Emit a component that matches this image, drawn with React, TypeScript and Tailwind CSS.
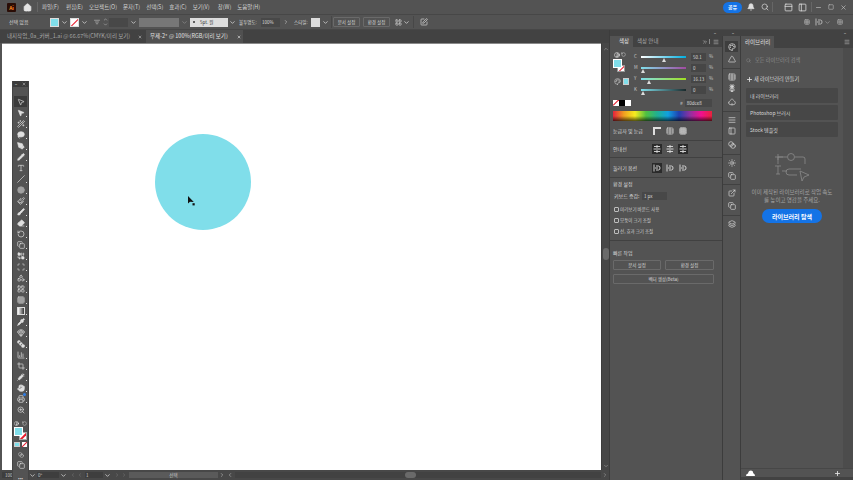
import React from "react";
import {
  Home, Bell, Search, Minus, Square, X, ChevronDown, ChevronsRight, Menu, MousePointer2, Wand2, Lasso, PenTool, Pencil, Type, Slash, Circle, Paintbrush, Brush, Eraser, RotateCcw, Copy, Scan, Shapes, Grid3x3, Blend, Pipette, BarChart3, Crop, Syringe, Hand, ZoomIn, Layers, ExternalLink, Spade, Palette, Table, Flower2, AlignJustify, Contrast, Sun, Plus, ChevronRight, SquarePen, LayoutGrid, PanelTop, Columns2, ChevronLeft, ChevronUp, Printer, Combine, SquareStack, Triangle, Gem, PanelLeft, ListFilter,
} from "lucide-react";

const menus = [["파일(F)", 7], ["편집(E)", 6], ["오브젝트(O)", 6], ["문자(T)", 6], ["선택(S)", 6], ["효과(C)", 6], ["보기(V)", 8], ["창(W)", 6], ["도움말(H)", 0]] as const;

const tools: [any, boolean][] = [
  [MousePointer2, true], [Wand2, false], [Lasso, true], [PenTool, true], [Pencil, true], [Type, false], [Slash, false], [Circle, true], [Paintbrush, false], [Brush, true], [Eraser, true], [RotateCcw, false], [Copy, false], [Combine, true], [Scan, false], [Shapes, false], [LayoutGrid, false], [Grid3x3, false], [Square, false], [Pipette, true], [Gem, false], [SquareStack, true], [BarChart3, false], [Crop, false], [Syringe, true], [Hand, true], [Printer, false], [ZoomIn, false],
];

const strip: [any, number, boolean][] = [
  [Triangle, 5, true], [Table, 3, false], [Flower2, 6, false], [Spade, 5, true], [AlignJustify, 3, false], [PanelLeft, 6, false], [Blend, 5, true], [Sun, 5, false], [Copy, 4, true], [ExternalLink, 5, false], [Copy, 5, true], [Layers, 0, false],
];

function Chev({ className = "" }: { className?: string }) {
  return <ChevronDown size={7} strokeWidth={2.5} className={"text-[#dddddd] " + className} />;
}

function SmallBtn({ label }: { label: string }) {
  return <div className="h-[10px] w-[27px] border border-[#6a6a6a] rounded-[1px] flex items-center justify-center text-[4.5px] text-[#d8d8d8]">{label}</div>;
}

function Slider({ label, value, bar, thumb }: { label: string; value: string; bar: string; thumb: string }) {
  return (
    <div className="flex items-center h-[11px]">
      <span className="w-[7px] text-[4.5px] text-[#c8c8c8]">{label}</span>
      <div className={"relative w-[45px] h-[2px] " + bar}>
        <div className={"absolute top-[2px] w-0 h-0 border-x-[2.5px] border-b-[4px] border-x-transparent border-b-[#dddddd] " + thumb} />
      </div>
      <div className="ml-[5px] w-[15px] h-[8px] bg-[#464646] text-[4.5px] text-[#dddddd] pl-[2px] leading-[8px]">{value}</div>
      <span className="ml-[3px] text-[4.5px] text-[#c8c8c8]">%</span>
    </div>
  );
}

function Divider() {
  return <div className="h-px bg-[#414141] -ml-[3px] -mr-[4px] shrink-0" />;
}

function Check({ label }: { label: string }) {
  return (
    <div className="flex items-center gap-[1px] h-[11px]">
      <div className="w-[5px] h-[5px] border border-[#bdbdbd] rounded-[1px]" />
      <span className="text-[4.5px] text-[#cfcfcf]">{label}</span>
    </div>
  );
}

function Glyph({ active, children }: { active?: boolean; children: React.ReactNode }) {
  return <div className={"w-[10px] h-[10px] flex items-center justify-center text-[#dedede] " + (active ? "bg-[#2b2b2b]" : "")}>{children}</div>;
}

function SnapIcon() {
  return (
    <svg width="8" height="8" viewBox="0 0 8 8" fill="none" stroke="currentColor" strokeWidth="0.9">
      <path d="M1 0.5 V7.5 M3 2 H5.5 Q7 2 7 4 Q7 6 5.5 6 H3 M2 4 H5" />
    </svg>
  );
}

function GuideIcon() {
  return (
    <svg width="8" height="8" viewBox="0 0 8 8" fill="none" stroke="currentColor" strokeWidth="0.9">
      <path d="M4 0 V8 M1 1.5 H7 M0.5 4 H3 M5 4 H7.5 M1 6.5 H7" />
    </svg>
  );
}

function LibRow({ label }: { label: string }) {
  return <div className="h-[15px] bg-[#474747] rounded-[1px] flex items-center pl-[4px] text-[5px] text-[#d8d8d8] mb-[2px] shrink-0">{label}</div>;
}

export default function App() {
  return (
    <div className="w-[853px] h-[480px] overflow-hidden bg-[#535353] relative flex flex-col font-['Noto_Sans_CJK_KR','Noto_Sans',sans-serif] text-[#d8d8d8]">
      {/* title bar */}
      <div className="h-[15px] bg-[#535353] border-b border-[#474747] flex items-center shrink-0">
        <div className="ml-[7px] w-[9px] h-[9px] bg-[#2a0d06] rounded-[1px] flex items-center justify-center text-[5px] font-bold text-[#ff8a1f] leading-none">Ai</div>
        <Home size={9} className="ml-[7px] text-[#e4e4e4]" fill="#e4e4e4" />
        <div className="ml-[5px] h-[10px] w-px bg-[#666666]" />
        <div className="ml-[4px] flex items-center text-[5.5px] text-[#d4d4d4]">
          {menus.map(([m, g]) => (
            <span key={m} style={{ marginRight: g }}>{m}</span>
          ))}
        </div>
        <div className="ml-auto flex items-center">
          <div className="w-[19px] h-[11px] rounded-full bg-[#1473e6] text-white text-[5px] flex items-center justify-center font-bold">공유</div>
          <Bell size={8} className="ml-[5px] text-[#e0e0e0]" fill="#e0e0e0" />
          <Search size={8} className="ml-[6px] text-[#e0e0e0]" />
          <div className="ml-[3px] h-[10px] w-px bg-[#666666]" />
          <PanelTop size={9} className="ml-[11px] text-[#e0e0e0]" />
          <PanelLeft size={9} className="ml-[5px] text-[#e0e0e0]" />
          <div className="ml-[4px] h-[10px] w-px bg-[#666666]" />
          <Minus size={7} className="ml-[3px] text-[#cccccc]" />
          <Square size={6} className="ml-[6px] text-[#cccccc]" />
          <X size={7} className="ml-[6px] mr-[6px] text-[#cccccc]" />
        </div>
      </div>

      {/* control bar */}
      <div className="h-[15px] bg-[#535353] flex items-center shrink-0 text-[5px] border-b border-[#474747]">
        <span className="ml-[9px] w-[41px] text-[#d4d4d4]">선택 없음</span>
        <div className="w-[9px] h-[9px] bg-[#80deea] border border-[#dddddd]" />
        <Chev className="ml-[2px]" />
        <div className="ml-[2px] w-[9px] h-[9px] bg-white border border-[#dddddd] relative overflow-hidden">
          <div className="absolute left-[-2px] top-[3px] w-[12px] h-px bg-[#e81c2e] -rotate-45" />
        </div>
        <Chev className="ml-[2px]" />
        <ListFilter size={6} className="ml-[6px] text-[#dddddd]" />
        <div className="ml-[3px] flex flex-col">
          <ChevronUp size={5} className="text-[#dddddd]" />
          <ChevronDown size={5} className="text-[#dddddd]" />
        </div>
        <div className="ml-[1px] w-[19px] h-[9px] bg-[#484848]" />
        <Chev className="ml-[2px]" />
        <div className="ml-[2px] w-[40px] h-[9px] bg-[#777777]" />
        <Chev className="ml-[2px] opacity-40" />
        <div className="ml-[2px] w-[38px] h-[9px] bg-[#dcdcdc] text-[#333333] flex items-center pl-[3px] gap-[5px] text-[4.5px]">
          <span className="w-[2px] h-[2px] rounded-full bg-[#333333]" />
          <span>5pt. 원</span>
        </div>
        <Chev className="ml-px" />
        <span className="ml-[3px] w-[22px] text-[#dddddd] text-[4.5px]">불투명도:</span>
        <div className="w-[19px] h-[9px] bg-[#484848] pl-[1px] leading-[9px] text-[#dddddd] text-[4.5px]">100%</div>
        <ChevronRight size={6} className="ml-[3px] text-[#dddddd]" />
        <span className="ml-[5px] w-[17px] text-[#dddddd] text-[4.5px]">스타일:</span>
        <div className="w-[9px] h-[9px] bg-[#dcdcdc]" />
        <Chev className="ml-[2px]" />
        <div className="ml-[2px] h-[12px] w-px bg-[#474747]" />
        <div className="ml-px flex gap-[3px]">
          <SmallBtn label="문서 설정" />
          <SmallBtn label="환경 설정" />
        </div>
        <LayoutGrid size={7} className="ml-[5px] text-[#dddddd]" />
        <Chev className="ml-[1px]" />
        <div className="ml-[3px] h-[12px] w-px bg-[#474747]" />
        <SquarePen size={8} className="ml-[6px] text-[#dddddd]" />
        <div className="ml-auto flex items-center mr-[10px] text-[#bdbdbd]">
          <Grid3x3 size={6} />
          <div className="ml-[5px]"><SnapIcon /></div>
          <Chev className="ml-[1px] opacity-50" />
          <Table size={6} className="ml-[6px]" />
        </div>
      </div>

      <div className="flex flex-1 min-h-0">
        {/* document area */}
        <div className="w-[609px] flex flex-col shrink-0">
          <div className="h-[13px] bg-[#424242] flex items-stretch text-[5.5px] shrink-0">
            <div className="w-[146px] flex items-center pl-[7px] text-[#a8a8a8]">
              <span className="w-[131px] whitespace-nowrap">내지작업_0a_커버_1.ai @ 66.67%(CMYK/미리 보기)</span>
              <X size={4} className="text-[#cfcfcf]" strokeWidth={3} />
            </div>
            <div className="w-[97px] bg-[#505050] flex items-center pl-[4px] text-[#e2e2e2]">
              <span className="w-[87px] whitespace-nowrap">무제-2* @ 100%(RGB/미리 보기)</span>
              <X size={4} className="text-white" strokeWidth={3} />
            </div>
          </div>
          <div className="flex flex-1 min-h-0">
            <div className="flex-1 flex flex-col">
              <div className="flex-1 bg-white ml-[2px] border-t border-[#8a8a8a] relative">
                <div className="absolute left-[153px] top-[90px] w-[96px] h-[96px] rounded-full bg-[#80deea]" />
                <svg className="absolute left-[185px] top-[151px]" width="9" height="12" viewBox="0 0 9 12">
                  <path d="M1 1 L1 8.5 L3 6.8 L6.8 7 Z" fill="#111" />
                  <rect x="5.5" y="8.2" width="2.2" height="2.2" fill="#111" />
                </svg>
              </div>
            </div>
            <div className="w-[8px] bg-[#474747] flex flex-col items-center relative border-l border-[#3d3d3d]">
              <ChevronUp size={6} className="mt-[3px] text-[#aaaaaa]" />
              <div className="mt-[196px] w-[6px] h-[12px] rounded-full bg-[#6a6a6a]" />
              <ChevronDown size={6} className="mt-auto mb-[1px] text-[#aaaaaa]" />
            </div>
          </div>
          {/* status bar */}
          <div className="h-[10px] bg-[#484848] flex items-center text-[4.5px] text-[#c8c8c8] shrink-0">
            <div className="ml-[2px] w-[26px] bg-[#3e3e3e] h-[6px] pl-[3px] leading-[6px]">100</div>
            <Chev className="ml-[1px]" />
            <div className="ml-px w-[22px] h-[6px] bg-[#3e3e3e] leading-[6px] pl-px">0°</div>
            <Chev className="ml-[1px]" />
            <ChevronLeft size={6} className="ml-[3px] opacity-40" />
            <ChevronLeft size={6} className="ml-[1px] opacity-40" />
            <div className="ml-[2px] w-[18px] h-[6px] bg-[#3e3e3e] leading-[6px] pl-px">1</div>
            <Chev className="ml-[1px]" />
            <ChevronRight size={6} className="ml-[3px] opacity-40" />
            <ChevronRight size={6} className="ml-[1px] opacity-40" />
            <div className="ml-[2px] w-[89px] h-[6px] bg-[#5a5a5a] text-center leading-[6px]">선택</div>
            <ChevronRight size={6} className="ml-[1px]" />
            <ChevronLeft size={6} className="ml-[2px]" />
            <div className="ml-[2px] flex-1 h-[6px] bg-[#424242] relative">
              <div className="absolute left-[170px] top-0 h-[6px] w-[11px] bg-[#6a6a6a] rounded-full" />
            </div>
            <ChevronRight size={6} className="mx-[1px] text-[#aaaaaa]" />
          </div>
        </div>

        {/* properties/colour dock */}
        <div className="flex-1 flex flex-col min-w-0 border-l border-[#3c3c3c]">
          <div className="h-[6px] bg-[#424242] shrink-0 flex items-center text-[3px] leading-none text-[#bbbbbb]">
            <span className="ml-[104px]">••</span>
            <span className="ml-[16px]">••</span>
            <span className="ml-[110px]">••</span>
          </div>
          <div className="flex flex-1 min-h-0">
            <div className="w-[113px] shrink-0 bg-[#535353] border-r border-[#3c3c3c] flex flex-col">
              <div className="h-[11px] bg-[#424242] flex items-center text-[5.5px] shrink-0">
                <div className="w-[23px] h-full bg-[#535353] flex items-center pl-[9px] text-[#e6e6e6]">색상</div>
                <span className="ml-[4px] text-[#a8a8a8]">색상 안내</span>
                <ChevronsRight size={6} className="ml-auto text-[#c8c8c8]" />
                <span className="mx-[1px] w-px h-[5px] bg-[#888888]" />
                <Menu size={6} className="ml-[2px] mr-[3px] text-[#c8c8c8]" />
              </div>
              <div className="pl-[3px] pr-[4px] flex flex-col flex-1">
                <div className="h-[75px] shrink-0 pt-[2px] flex flex-col">
                  <div className="flex">
                    <div className="w-[23px] relative h-[47px] shrink-0">
                      <Contrast size={6} className="absolute left-[1px] top-[3px] text-white" />
                      <RotateCcw size={5} className="absolute left-[8px] top-[3px] text-[#dddddd]" />
                      <div className="absolute left-[4px] top-[16px] w-[8px] h-[7px] bg-white border border-[#999999] overflow-hidden">
                        <div className="absolute left-[-2px] top-[2px] w-[12px] h-px bg-[#e81c2e] -rotate-45" />
                      </div>
                      <div className="absolute left-0 top-[10px] w-[9px] h-[9px] bg-[#80deea] border border-white" />
                      <Palette size={7} className="absolute left-[1px] top-[29px] text-[#cccccc]" />
                      <div className="absolute left-[10px] top-[29px] w-[6px] h-[7px] bg-[#80deea] border border-[#cccccc]" />
                    </div>
                    <div className="flex-1 pt-[2px] -ml-[2px]">
                      <Slider label="C" value="50.1" thumb="left-[21px]" bar="bg-[linear-gradient(to_right,#ffffff,#00aee0)]" />
                      <Slider label="M" value="0" thumb="left-[0px]" bar="bg-[linear-gradient(to_right,#80deea,#a04aa0)]" />
                      <Slider label="Y" value="16.13" thumb="left-[6px]" bar="bg-[linear-gradient(to_right,#80deea,#a0e020)]" />
                      <Slider label="K" value="0" thumb="left-[0px]" bar="bg-[linear-gradient(to_right,#80deea,#1a2a2c)]" />
                    </div>
                  </div>
                  <div className="flex items-center h-[8px] mt-[3px]">
                    <div className="w-[6px] h-[6px] bg-white relative overflow-hidden">
                      <div className="absolute left-[-1px] top-[2px] w-[8px] h-px bg-[#e81c2e] -rotate-45" />
                    </div>
                    <div className="w-[6px] h-[6px] bg-black" />
                    <div className="w-[6px] h-[6px] bg-white" />
                    <span className="ml-[49px] text-[5px] text-[#cccccc]">#</span>
                    <div className="ml-[2px] w-[27px] h-[8px] bg-[#484848] text-[4.5px] leading-[8px] pl-[2px] text-[#dddddd]">80dce8</div>
                  </div>
                  <div className="mt-[4px] w-[99px] h-[10px] bg-[linear-gradient(to_bottom,#ffffff00,#ffffff00_50%,#000000aa),linear-gradient(to_right,#e8223c,#f0a020,#f6ec20,#50c040,#20b090,#10a0e0,#2040b0,#9030a0,#f01090,#e8223c)]" />
                </div>
                <div className="h-[13px] flex items-center mt-[2px] shrink-0">
                  <span className="w-[39px] text-[5px]">눈금자 및 눈금</span>
                  <div className="flex gap-[3px]">
                    <Glyph>
                      <svg width="8" height="8" viewBox="0 0 8 8" fill="currentColor"><path d="M0 0 H8 V2 H2 V8 H0 Z" /></svg>
                    </Glyph>
                    <Glyph><Table size={8} /></Glyph>
                    <Glyph><Grid3x3 size={8} strokeDasharray="1 1" /></Glyph>
                  </div>
                </div>
                <div className="h-[3px] shrink-0" />
                <Divider />
                <div className="h-[16px] flex items-center shrink-0">
                  <span className="w-[39px] text-[5px]">안내선</span>
                  <div className="flex gap-[3px]">
                    <Glyph active><GuideIcon /></Glyph>
                    <Glyph><GuideIcon /></Glyph>
                    <Glyph active><GuideIcon /></Glyph>
                  </div>
                </div>
                <Divider />
                <div className="h-[19px] flex items-center shrink-0">
                  <span className="w-[39px] text-[5px]">둘러기 옵션</span>
                  <div className="flex gap-[3px]">
                    <Glyph active><SnapIcon /></Glyph>
                    <Glyph><SnapIcon /></Glyph>
                    <Glyph><SnapIcon /></Glyph>
                  </div>
                </div>
                <Divider />
                <div className="h-[11px] flex items-center text-[5px] shrink-0">환경 설정</div>
                <div className="h-[10px] mt-[2px] flex items-center text-[5px] pl-px shrink-0">
                  <span className="w-[28px]">키보드 증감:</span>
                  <div className="w-[25px] h-[8px] bg-[#484848] text-[4.5px] leading-[8px] pl-[2px]">1 px</div>
                </div>
                <div className="h-[3px] shrink-0" />
                <div className="pl-[1px] shrink-0">
                  <Check label="미리보기 바운드 사용" />
                  <Check label="모퉁이 크기 조절" />
                  <Check label="선, 효과 크기 조절" />
                </div>
                <div className="h-[3px] shrink-0" />
                <Divider />
                <div className="h-[18px] flex items-center text-[5px] pt-[5px] shrink-0">빠른 작업</div>
                <div className="flex gap-[4px] mt-[1px]">
                  <div className="w-[48px] h-[10px] border border-[#6a6a6a] rounded-[1px] flex items-center justify-center text-[4.5px]">문서 설정</div>
                  <div className="w-[49px] h-[10px] border border-[#6a6a6a] rounded-[1px] flex items-center justify-center text-[4.5px]">환경 설정</div>
                </div>
                <div className="mt-[4px] w-[101px] h-[10px] border border-[#6a6a6a] rounded-[1px] flex items-center justify-center text-[4.5px]">벡터 생성(Beta)</div>
              </div>
            </div>

            {/* icon strip */}
            <div className="w-[18px] shrink-0 bg-[#535353] border-r border-[#3c3c3c] flex flex-col items-center pt-[5px]">
              <div className="w-[13px] h-[11px] bg-[#3e3e3e] flex items-center justify-center mb-[3px]">
                <Palette size={8} className="text-[#e4e4e4]" />
              </div>
              {strip.map(([Icon, gap, line], i) => (
                <React.Fragment key={i}>
                  <Icon size={8} className="text-[#dddddd] shrink-0" style={{ marginBottom: gap }} />
                  {line && <div className="w-full h-px bg-[#414141] mb-[4px] shrink-0" />}
                </React.Fragment>
              ))}
            </div>

            {/* libraries */}
            <div className="flex-1 min-w-0 flex flex-col bg-[#535353]">
              <div className="h-[12px] bg-[#424242] flex items-center shrink-0">
                <div className="w-[33px] h-full bg-[#535353] flex items-center pl-[4px] text-[5.5px] text-[#e4e4e4]">라이브러리</div>
                <Menu size={6} className="ml-auto mr-[3px] text-[#c8c8c8]" />
              </div>
              <div className="flex flex-1 min-h-0">
                <div className="flex-1 min-w-0 px-[5px] flex flex-col">
                  <div className="h-[24px] flex items-center text-[5.2px] text-[#8f8f8f] shrink-0">
                    <Search size={5} className="mr-[4px]" />
                    <span>모든 라이브러리 검색</span>
                  </div>
                  <div className="h-[14px] flex items-center text-[5.2px] text-[#dddddd] shrink-0">
                    <Plus size={7} strokeWidth={3} className="mr-[1px]" />
                    <span>새 라이브러리 만들기</span>
                  </div>
                  <div className="h-[2px] shrink-0" />
                  <LibRow label="내 라이브러리" />
                  <LibRow label="Photoshop 브러시" />
                  <LibRow label="Stock 템플릿" />
                  <div className="flex flex-col items-center mt-[13px]">
                    <svg width="38" height="30" viewBox="0 0 38 30" fill="none" stroke="#8a8a8a" strokeWidth="0.8">
                      <path d="M2 5 H10 M5 2 V8 M5 12 V5 H14 M22 5 H30 Q32 5 32 7 V12" />
                      <circle cx="18" cy="5" r="3.5" />
                      <path d="M2 14 H8 M5 14 V22 M3 22 H7" />
                      <path d="M9 19 H14 M24 23 H16 Q13 23 13 20 Q13 17 16 17 H28" />
                      <path d="M27 19 L36 23 L31 25 L29 29 Z" />
                    </svg>
                    <div className="mt-[6px] text-[5.5px] leading-[8px] text-center text-[#a4a4a4] whitespace-nowrap">
                      <div>이미 제작된 라이브러리로 작업 속도</div>
                      <div>를 높이고 영감을 주세요.</div>
                    </div>
                    <div className="mt-[5px] w-[60px] h-[14px] rounded-full bg-[#1473e6] text-white text-[6px] font-bold flex items-center justify-center">라이브러리 탐색</div>
                  </div>
                </div>
                <div className="w-[10px] bg-[#4c4c4c] shrink-0" />
              </div>
              <div className="h-[9px] border-t border-[#474747] flex items-center pl-[5px] pr-[12px] shrink-0">
                <svg width="9" height="6" viewBox="0 0 9 6" fill="#ffffff">
                  <path d="M0 6 Q0 3.5 2 3.5 Q2.5 0.5 5 0.5 Q7.3 0.8 7.3 3.2 Q9 3.8 9 6 Z" />
                </svg>
                <Plus size={7} strokeWidth={3} className="ml-auto text-[#e4e4e4]" />
              </div>
              <div className="h-[3px] bg-[#424242] shrink-0" />
            </div>
          </div>
        </div>
      </div>

      {/* floating tools panel */}
      <div className="absolute left-[12px] top-[81px] bottom-0 w-[17px] bg-[#535353] flex flex-col items-center border-x border-[#444444]">
        <div className="w-full h-[6px] bg-[#3c3c3c] flex items-center justify-between px-[2px] shrink-0">
          <span className="text-[3px] leading-none text-[#cccccc]">••</span>
          <X size={4} strokeWidth={3} className="text-[#cccccc]" />
        </div>
        <div className="w-[13px] h-[11px] mt-[9px] bg-[#3b3b3b] flex items-center justify-center shrink-0">
          <MousePointer2 size={8} className="text-[#e0e0e0]" />
        </div>
        {tools.map(([Icon, filled], i) => (
          <div key={i} className="relative w-[13px] h-[11px] flex items-center justify-center shrink-0">
            {i === 18 ? (
              <div className="w-[8px] h-[8px] border border-[#dddddd] bg-[linear-gradient(to_right,#ffffff,#333333)]" />
            ) : (
              <Icon size={8} className={i === 7 ? "text-[#a0a0a0]" : "text-[#e0e0e0]"} fill={filled ? "currentColor" : "none"} />
            )}
            {i !== 5 && i !== 27 && <span className="absolute right-0 bottom-[1px] w-px h-px bg-[#dddddd]" />}
            {i === 26 && <span className="absolute right-[1px] top-0 w-[3px] h-[3px] rounded-full bg-[#2f7fe8]" />}
          </div>
        ))}
        <div className="relative w-[15px] h-[28px] mt-[6px] shrink-0">
          <Contrast size={5} className="absolute left-[1px] top-0 text-white" />
          <RotateCcw size={5} className="absolute left-[9px] top-0 text-[#dddddd]" />
          <div className="absolute left-[6px] top-[11px] w-[8px] h-[8px] bg-white border border-[#aaaaaa] overflow-hidden">
            <div className="absolute left-[-2px] top-[2px] w-[12px] h-[1.5px] bg-[#e81c2e] -rotate-45" />
          </div>
          <div className="absolute left-[1px] top-[6px] w-[9px] h-[9px] bg-[#80deea] border border-white" />
          <div className="absolute left-[1px] top-[21px] w-[6px] h-[5px] bg-[#80deea] border border-[#cccccc]" />
          <div className="absolute left-[9px] top-[21px] w-[5px] h-[5px] bg-white overflow-hidden">
            <div className="absolute left-[-1px] top-[2px] w-[7px] h-px bg-[#e81c2e] -rotate-45" />
          </div>
        </div>
        <Blend size={6} className="mt-[3px] text-[#cccccc] shrink-0" />
        <Copy size={8} className="mt-[3px] text-[#dddddd] shrink-0" />
        <span className="mt-auto text-[5px] leading-[5px] text-[#cccccc]">•••</span>
      </div>
    </div>
  );
}
